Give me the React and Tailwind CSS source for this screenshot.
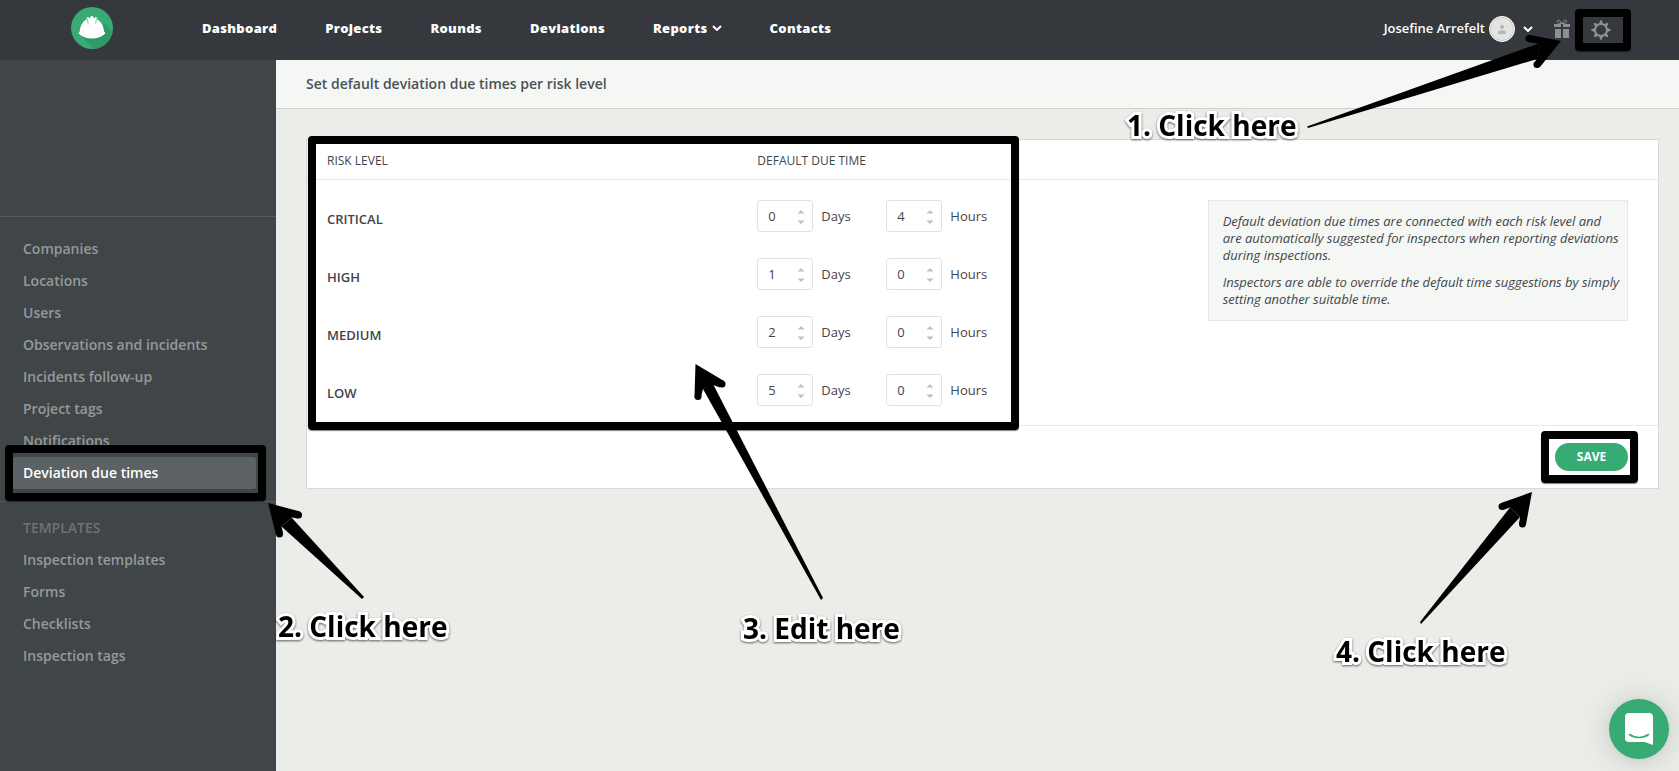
import { useState } from 'react';

const navLinks = ['Dashboard', 'Projects', 'Rounds', 'Deviations', 'Reports', 'Contacts'];

const settingsLinks = [
  'Companies',
  'Locations',
  'Users',
  'Observations and incidents',
  'Incidents follow-up',
  'Project tags',
  'Notifications',
  'Deviation due times',
];

const templateLinks = ['Inspection templates', 'Forms', 'Checklists', 'Inspection tags'];

const defaultLevels = [
  { name: 'CRITICAL', days: 0, hours: 4 },
  { name: 'HIGH', days: 1, hours: 0 },
  { name: 'MEDIUM', days: 2, hours: 0 },
  { name: 'LOW', days: 5, hours: 0 },
];

// tapered shaft, head outline, and the round ends of both barbs
const arrows = [
  {
    shaft: 'M1307 126.500L1540 43L1537 59L1308 128z',
    head: 'M1561 41L1530 35L1528 42L1540 44L1537 59L1534 63L1540 67z',
    caps: [[1529, 38.5], [1537, 64.5]],
  },
  {
    shaft: 'M364 597L291.500 517.500L281.500 526.500L362 599z',
    head: 'M268 503L300 511.500L298 518.500L291.500 517.500L281.500 526.500L283 533L276 535z',
    caps: [[298.5, 515], [279.5, 534]],
  },
  {
    shaft: 'M823 598L713 384L703 389L821 600z',
    head: 'M695.500 364L724 381L720 387.500L713 385L703 389L701 397L694.500 396.500z',
    caps: [[722, 384], [698, 396.5]],
  },
  {
    shaft: 'M1420 622L1510 507.500L1520 517L1421 624z',
    head: 'M1532 492L1501 503L1503 510L1510 507.500L1520 517L1519 524L1526 524.500z',
    caps: [[1502, 506.5], [1522.5, 524]],
  },
];

const notes = [
  { text: '1. Click here', place: 'left-[1127px] top-[105px]' },
  { text: '2. Click here', place: 'left-[278px] top-[606px]' },
  { text: '3. Edit here', place: 'left-[743px] top-[608px]' },
  { text: '4. Click here', place: 'left-[1336px] top-[631px]' },
];

function Chevron() {
  return (
    <svg className="w-[10px] h-[6px]" viewBox="0 0 10 6" fill="none" stroke="currentColor" strokeWidth="2">
      <path d="M1 1l4 4 4-4" />
    </svg>
  );
}

function Logo() {
  return (
    <svg className="w-[42px] h-[42px]" viewBox="0 0 42 42">
      <circle cx="21" cy="21" r="21" fill="#38aa74" />
      <path d="M8 27 L23 42 A21 21 0 0 0 41.500 25 L34 17 Z" fill="#2f9a67" />
      <path
        d="M7.500 26.500c0-1 .8-1.200 1.200-2 .3-5 2.400-9.500 6.500-11.800l.6-2.200 1.600-.6.800 1.400.9-.4.500-1.700h2.600l.5 1.700.9.400.8-1.400 1.600.6.600 2.200c4.100 2.300 6.200 6.800 6.500 11.800.4.800 1.200 1 1.200 2-3.500 3.500-8 5-13.400 5s-9.900-1.500-13.400-5z"
        fill="#fff"
      />
      <path d="M16.300 11.500l.8 5M25.500 11.500l-.8 5" stroke="#38aa74" strokeWidth=".7" />
    </svg>
  );
}

function GiftIcon() {
  return (
    <svg className="w-[18px] h-5" viewBox="0 0 18 20" fill="#8d8f91">
      <path d="M1 5h7v3H1zM10 5h7v3h-7zM2 10h6v9H2zM10 10h6v9h-6z" />
      <path d="M9 5C7.500 1 4.500 0 4.300 2.500 4.200 4 6 4.500 9 4.600c3-.1 4.800-.6 4.700-2.100C13.500 0 10.500 1 9 5z" fill="none" stroke="#8d8f91" />
    </svg>
  );
}

function GearIcon() {
  return (
    <svg className="w-5 h-5" viewBox="0 0 20 20" fill="#8d8f91">
      <circle cx="10" cy="10" r="6" fill="none" stroke="#8d8f91" strokeWidth="2" />
      {[0, 45, 90, 135, 180, 225, 270, 315].map((deg) => (
        <path key={deg} d="M8 4 L9.300 .3 h1.400 L12 4 Z" transform={`rotate(${deg} 10 10)`} />
      ))}
    </svg>
  );
}

// Thick marker frame laid over the element that it points out
function Frame({ className }) {
  return (
    <div
      className={`absolute z-10 border-8 border-black rounded pointer-events-none shadow-[0_1px_1px_rgba(0,0,0,0.5)] ${className}`}
    ></div>
  );
}

function SideLink({ label, active }) {
  return (
    <a
      href="#"
      className={`block h-8 leading-8 px-[10px] rounded-[3px] ${active ? 'bg-[#5c6164] text-white' : 'text-[#95999b]'}`}
    >
      {label}
    </a>
  );
}

function NumberField({ id, label, value, onChange }) {
  return (
    <div className="flex items-center gap-2">
      <div className="relative">
        <input
          id={id}
          type="text"
          inputMode="numeric"
          value={value}
          onChange={(e) => onChange(e.target.value)}
          className="block w-14 h-8 pl-[10px] pr-5 border border-[#e0e2e3] rounded-[3px] bg-white focus:outline-none"
        />
        <svg className="absolute right-2 top-[10px] w-2 h-[14px]" viewBox="0 0 8 14" fill="#bdc0c2">
          <path d="M.5 3.500L4 0l3.500 3.500zM.5 10.500L4 14l3.500-3.500z" />
        </svg>
      </div>
      <label htmlFor={id} className="pt-[2px]">{label}</label>
    </div>
  );
}

export default function App() {
  const [levels, setLevels] = useState(defaultLevels);

  const updateLevel = (index, key, value) => {
    setLevels(levels.map((level, i) => (i === index ? { ...level, [key]: value } : level)));
  };

  return (
    <div className="relative min-h-screen flex flex-col overflow-hidden bg-[#ebede8] font-['Open_Sans',sans-serif] text-[13px] text-[#3f464a]">
      {/* Top bar */}
      <header className="h-[60px] flex items-start justify-between bg-[#35393d] text-white">
        <div className="flex items-start pl-[71px] pt-[7px]">
          <Logo />
          <nav className="flex gap-12 pl-[89px] pt-[11px] leading-5 font-extrabold tracking-wide">
            {navLinks.map((link) => (
              <a key={link} href="#" className="flex items-center gap-1">
                {link}
                {link === 'Reports' && <Chevron />}
              </a>
            ))}
          </nav>
        </div>
        <div className="flex items-center h-[58px] pr-[68px]">
          <button type="button" className="flex items-center gap-1 font-semibold">
            Josefine Arrefelt
            <span className="w-[26px] h-[26px] rounded-full bg-[#e4e4e3] border border-white ring-1 ring-[#c5c5c5] ring-inset flex items-center justify-center">
              <svg className="w-2 h-[9px]" viewBox="0 0 8 9" fill="#b5b6b6">
                <circle cx="4" cy="2" r="2" />
                <path d="M0 9V7.500C0 6 2 5.200 4 5.200S8 6 8 7.500V9z" />
              </svg>
            </span>
            <span className="pl-1"><Chevron /></span>
          </button>
          <button type="button" aria-label="News" className="ml-5"><GiftIcon /></button>
          <button type="button" aria-label="Settings" className="relative ml-5 mt-[2px]">
            <GearIcon />
            <Frame className="-left-4 -right-5 -inset-y-[11px]" />
          </button>
        </div>
      </header>

      <div className="flex-1 flex">
        {/* Settings menu */}
        <aside className="w-[276px] shrink-0 bg-[#404548] pt-[156px] text-sm font-semibold">
          <div className="relative border-y border-[#55595c] pt-4 pb-3 pl-[13px] pr-5">
            {settingsLinks.map((label) => (
              <SideLink key={label} label={label} active={label === 'Deviation due times'} />
            ))}
            <Frame className="left-[5px] right-[10px] bottom-0 h-14" />
          </div>
          <div className="pt-[10px] pl-[13px] pr-5">
            <h2 className="h-8 leading-8 px-[10px] text-[#6e7275]">TEMPLATES</h2>
            {templateLinks.map((label) => (
              <SideLink key={label} label={label} />
            ))}
          </div>
        </aside>

        <main className="flex-1">
          <h1 className="h-[49px] leading-[48px] px-[30px] bg-[#f5f7f4] border-b border-[#cfd1cf] text-sm font-semibold text-[#4a5256]">
            Set default deviation due times per risk level
          </h1>

          <form
            className="relative mt-[30px] ml-[30px] mr-5 bg-white border border-[#d8dad9]"
            onSubmit={(e) => e.preventDefault()}
          >
            <Frame className="left-px top-[-4px] w-[711px] bottom-[58px]" />
            <div className="border-b border-[#e8e9e9] pb-[13px]">
              <table className="w-full table-fixed border-separate border-spacing-0">
                <thead>
                  <tr className="text-xs text-left">
                    <th className="h-10 pl-5 pt-[2px] font-normal border-b border-[#e8e9e9]">RISK LEVEL</th>
                    <th className="pt-[2px] font-normal border-b border-[#e8e9e9]">DEFAULT DUE TIME</th>
                    <th className="border-b border-[#e8e9e9]"></th>
                  </tr>
                </thead>
                <tbody>
                  {levels.map((level, i) => (
                    <tr key={level.name} className="align-top">
                      <th scope="row" className="pl-5 pt-7 leading-[22px] text-left font-semibold">{level.name}</th>
                      <td className="pt-5 pb-[6px]">
                        <div className="flex">
                          <div className="w-[129px]">
                            <NumberField
                              id={`days-${i}`}
                              label="Days"
                              value={level.days}
                              onChange={(v) => updateLevel(i, 'days', v)}
                            />
                          </div>
                          <NumberField
                            id={`hours-${i}`}
                            label="Hours"
                            value={level.hours}
                            onChange={(v) => updateLevel(i, 'hours', v)}
                          />
                        </div>
                      </td>
                      {i === 0 && (
                        <td rowSpan={4} className="pt-5 pr-[30px]">
                          <div className="border border-[#e6e8e6] bg-[#f5f7f4] py-3 pl-[14px] pr-1 space-y-[10px] leading-[17px] italic">
                            <p>
                              Default deviation due times are connected with each risk level and
                              <br />
                              are automatically suggested for inspectors when reporting deviations during inspections.
                            </p>
                            <p>
                              Inspectors are able to override the default time suggestions by simply setting another
                              suitable time.
                            </p>
                          </div>
                        </td>
                      )}
                    </tr>
                  ))}
                </tbody>
              </table>
            </div>
            <div className="flex justify-end py-[17px] pr-[30px]">
              <div className="relative">
                <button type="submit" className="block w-[73px] h-7 rounded-full bg-[#38aa74] text-white text-xs font-bold">
                  SAVE
                </button>
                <Frame className="-left-[14px] -right-[10px] -inset-y-3" />
              </div>
            </div>
          </form>
        </main>
      </div>

      {/* Instructions drawn over the page */}
      <svg className="absolute inset-0 w-full h-full pointer-events-none z-10">
        {arrows.map((arrow) => (
          <g key={arrow.shaft}>
            <path d={arrow.shaft} />
            <path d={arrow.head} />
            {arrow.caps.map(([x, y]) => (
              <circle key={x} cx={x} cy={y} r="3.5" />
            ))}
          </g>
        ))}
      </svg>
      {notes.map((note) => (
        <p
          key={note.text}
          className={`absolute z-20 whitespace-nowrap text-[28px] leading-10 font-bold text-black [-webkit-text-stroke:6px_white] [paint-order:stroke_fill] [stroke-linejoin:round] drop-shadow-[0_1px_1px_rgba(0,0,0,0.6)] ${note.place}`}
        >
          {note.text}
        </p>
      ))}

      <button
        type="button"
        aria-label="Open chat"
        className="absolute z-20 right-[10px] bottom-3 w-[60px] h-[60px] rounded-full bg-[#38aa74] flex items-center justify-center shadow-[0_1px_6px_rgba(0,0,0,0.06),0_2px_32px_rgba(0,0,0,0.16)]"
      >
        <svg className="w-7 h-8" viewBox="0 0 28 32">
          <path d="M28 32s-4.700-1.900-8.400-3H3.500C1.600 29 0 27.500 0 25.500v-22C0 1.500 1.600 0 3.500 0h21C26.400 0 28 1.500 28 3.500V32z" fill="#fff" />
          <path d="M4.500 21.500c5.500 4 13.500 4 19 0" fill="none" stroke="#38aa74" strokeWidth="1.600" strokeLinecap="round" />
        </svg>
      </button>
    </div>
  );
}
